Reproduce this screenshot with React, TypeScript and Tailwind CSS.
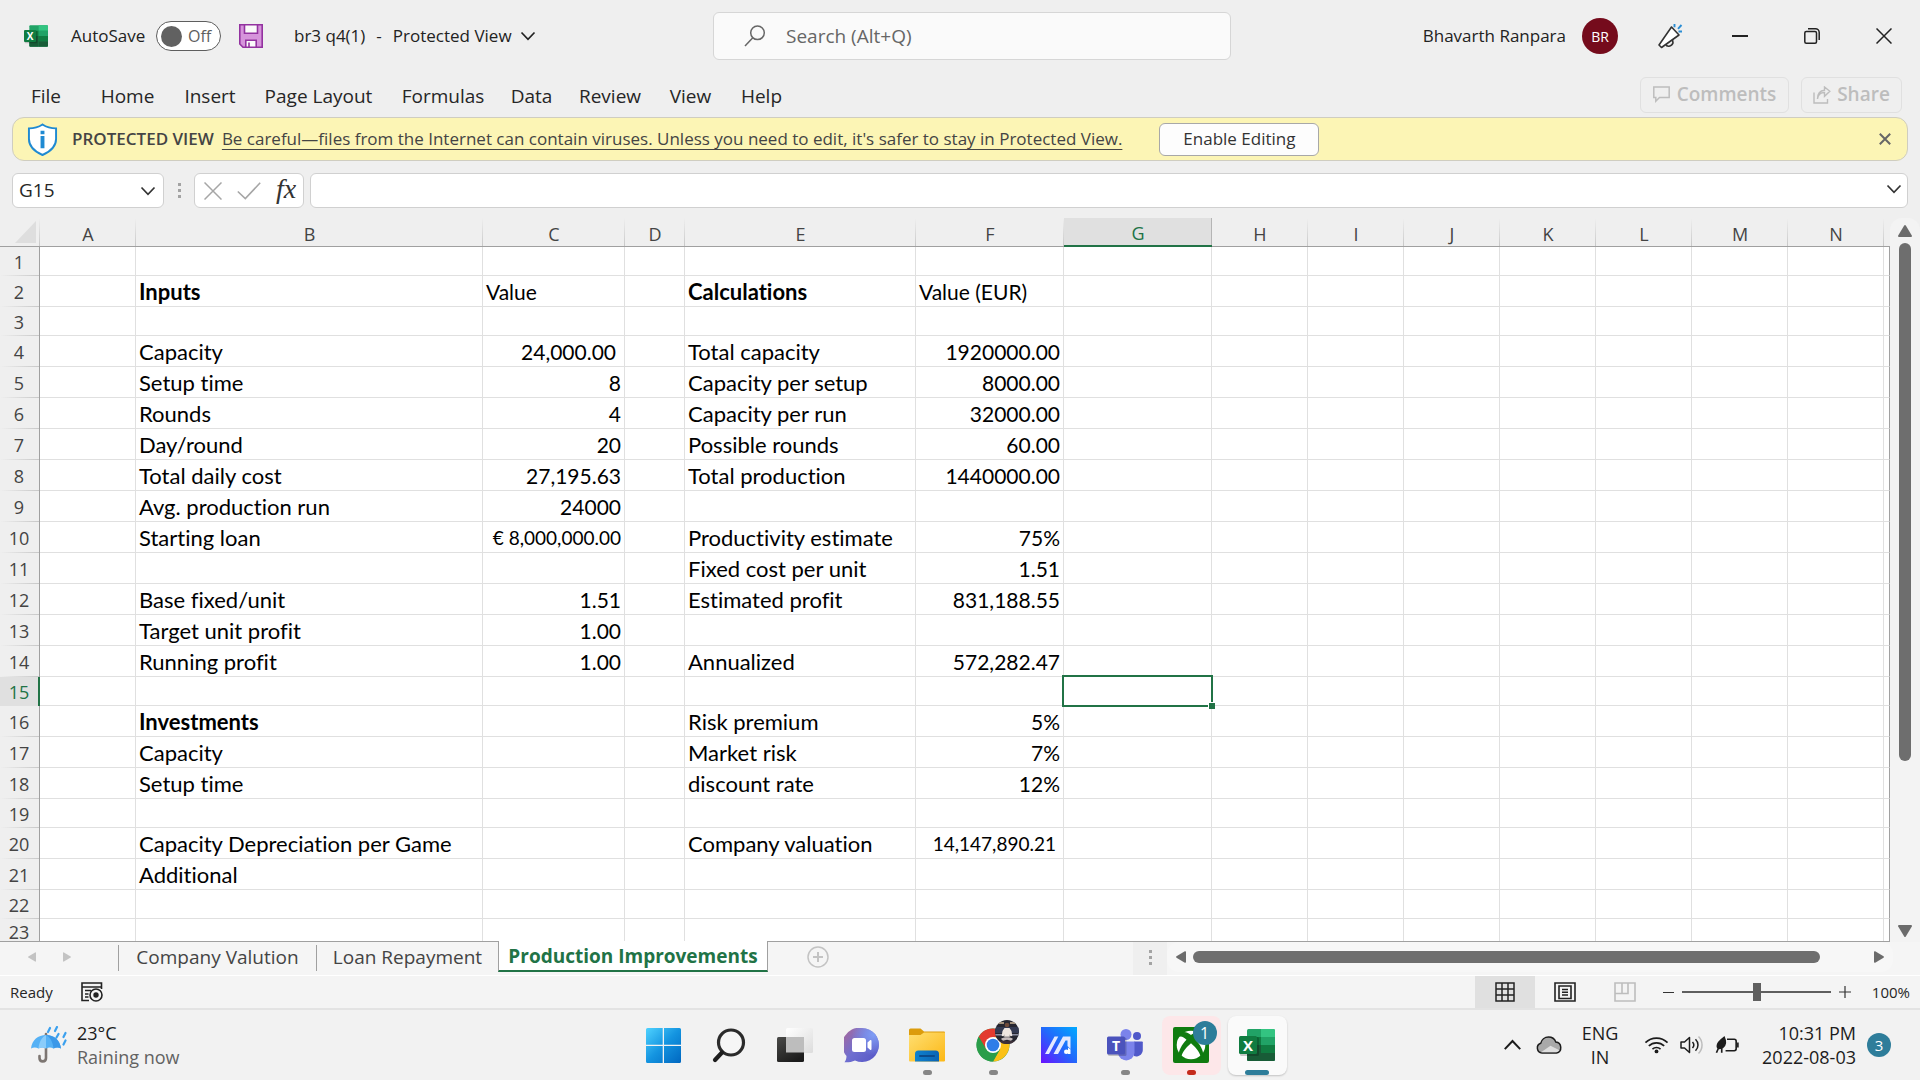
import { useState } from "react";

interface IRow {
  id: number;
  height: string;
  cells: Record<string, string>;
}

const columns = [
  { name: "A", width: "w-[96px]" },
  { name: "B", width: "w-[347px]" },
  { name: "C", width: "w-[142px]" },
  { name: "D", width: "w-[60px]" },
  { name: "E", width: "w-[231px]" },
  { name: "F", width: "w-[148px]" },
  { name: "G", width: "w-[148px]" },
  { name: "H", width: "w-[96px]" },
  { name: "I", width: "w-[96px]" },
  { name: "J", width: "w-[96px]" },
  { name: "K", width: "w-[96px]" },
  { name: "L", width: "w-[96px]" },
  { name: "M", width: "w-[96px]" },
  { name: "N", width: "w-[96px]" },
];

const rows: IRow[] = [
  { id: 1, height: "h-[29px]", cells: {} },
  { id: 2, height: "h-[31px]", cells: { B: "Inputs", C: "Value", E: "Calculations", F: "Value (EUR)" } },
  { id: 3, height: "h-[29px]", cells: {} },
  { id: 4, height: "h-[31px]", cells: { B: "Capacity", C: "24,000.00", E: "Total capacity", F: "1920000.00" } },
  { id: 5, height: "h-[31px]", cells: { B: "Setup time", C: "8", E: "Capacity per setup", F: "8000.00" } },
  { id: 6, height: "h-[31px]", cells: { B: "Rounds", C: "4", E: "Capacity per run", F: "32000.00" } },
  { id: 7, height: "h-[31px]", cells: { B: "Day/round", C: "20", E: "Possible rounds", F: "60.00" } },
  { id: 8, height: "h-[31px]", cells: { B: "Total daily cost", C: "27,195.63", E: "Total production", F: "1440000.00" } },
  { id: 9, height: "h-[31px]", cells: { B: "Avg. production run", C: "24000" } },
  { id: 10, height: "h-[31px]", cells: { B: "Starting loan", C: "€ 8,000,000.00", E: "Productivity estimate", F: "75%" } },
  { id: 11, height: "h-[31px]", cells: { E: "Fixed cost per unit", F: "1.51" } },
  { id: 12, height: "h-[31px]", cells: { B: "Base fixed/unit", C: "1.51", E: "Estimated profit", F: "831,188.55" } },
  { id: 13, height: "h-[31px]", cells: { B: "Target unit profit", C: "1.00" } },
  { id: 14, height: "h-[31px]", cells: { B: "Running profit", C: "1.00", E: "Annualized", F: "572,282.47" } },
  { id: 15, height: "h-[29px]", cells: {} },
  { id: 16, height: "h-[31px]", cells: { B: "Investments", E: "Risk premium", F: "5%" } },
  { id: 17, height: "h-[31px]", cells: { B: "Capacity", E: "Market risk", F: "7%" } },
  { id: 18, height: "h-[31px]", cells: { B: "Setup time", E: "discount rate", F: "12%" } },
  { id: 19, height: "h-[29px]", cells: {} },
  { id: 20, height: "h-[31px]", cells: { B: "Capacity Depreciation per Game", E: "Company valuation", F: "14,147,890.21" } },
  { id: 21, height: "h-[31px]", cells: { B: "Additional" } },
  { id: 22, height: "h-[29px]", cells: {} },
  { id: 23, height: "h-[25px]", cells: {} },
];

const boldCells = ["B2", "E2", "B16"];

// Cells whose format differs from the rest of the column
const cellFormats: Record<string, string> = {
  C2: "pr-[3px] text-[21px]",
  F2: "pr-[3px] text-[21px]",
  C4: "pr-[8px] text-[21px]",
  C10: "pr-[3px] text-[19px]",
  F20: "pr-[7px] text-[19px]",
};

const ribbonTabs = [
  { name: "File", width: "w-[70px]" },
  { name: "Home", width: "w-[93px]" },
  { name: "Insert", width: "w-[72px]" },
  { name: "Page Layout", width: "w-[145px]" },
  { name: "Formulas", width: "w-[104px]" },
  { name: "Data", width: "w-[73px]" },
  { name: "Review", width: "w-[84px]" },
  { name: "View", width: "w-[77px]" },
  { name: "Help", width: "w-[65px]" },
];

/* ---------- icons ---------- */

const ExcelIcon = ({ className }: { className: string }) => (
  <svg viewBox="0 0 36 36" className={className} aria-hidden="true">
    <rect x="8" y="2" width="28" height="32" rx="1.5" fill="#21a366" />
    <path d="M22 2h12.500a1.500 1.500 0 0 1 1.500 1.500V10H22z" fill="#33c481" />
    <path d="M8 10h14v8H8z" fill="#107c41" />
    <path d="M22 10h14v8H22z" fill="#21a366" />
    <path d="M8 18h14v16H9.500A1.500 1.500 0 0 1 8 32.500z" fill="#185c37" />
    <path d="M22 18h14v8H22z" fill="#107c41" />
    <path d="M22 26h14v6.500a1.500 1.500 0 0 1-1.500 1.500H22z" fill="#185c37" />
    <rect x="1" y="10" width="19" height="19" rx="1.500" fill="#000" opacity="0.2" />
    <rect x="0" y="9" width="18" height="18" rx="1.500" fill="#107c41" />
    <text x="9" y="23.500" textAnchor="middle" fontSize="15" fontWeight="700" fill="#fff" fontFamily="Open Sans, sans-serif">
      X
    </text>
  </svg>
);

const ChevronDown = ({ className }: { className: string }) => (
  <svg viewBox="0 0 16 10" className={className} fill="none" stroke="currentColor" strokeWidth="1.7" aria-hidden="true">
    <path d="M1.500 1.500 8 8.300l6.500-6.800" />
  </svg>
);

const SaveIcon = () => (
  <svg viewBox="0 0 24 24" className="size-6" aria-hidden="true">
    <path d="M.8.800h22.400v22.400H4L.8 20z" fill="#d694db" stroke="#9332a0" strokeWidth="1.600" />
    <path d="M5.500.8h13v8.400h-13z" fill="#fafafa" stroke="#9332a0" strokeWidth="1.600" />
    <path d="M6.800 23.200v-7h10.400v7z" fill="#fafafa" stroke="#9332a0" strokeWidth="1.600" />
    <path d="M10 18.500v4.500" stroke="#9332a0" strokeWidth="1.600" />
  </svg>
);

const MegaphoneIcon = () => (
  <svg viewBox="0 0 26 26" className="size-[26px]" fill="none" stroke="#333" strokeWidth="1.600" strokeLinejoin="round" aria-hidden="true">
    <path d="m14.500 4 7.500 8L4.500 24.500 2 22z" fill="#fff" />
    <path d="M9 21.500c.5 2.500 5.500 2.500 7-1.500l-.5-3" />
    <path d="M17.500 1v3.200M24.500 2 21 5.800M21.500 8.500h3.500" stroke="#2a8dd4" strokeWidth="1.900" />
  </svg>
);

const ShieldIcon = () => (
  <svg viewBox="0 0 32 34" className="h-[33px] w-[31px]" aria-hidden="true">
    <path d="M16 1.500c4.500 3 9 4 14 4v11c0 8-6 13-14 16.500C8 29.500 2 24.500 2 16.500v-11c5 0 9.500-1 14-4z" fill="#fff" stroke="#1f8ad2" strokeWidth="2" />
    <path d="M14 8h4v3.500h-4zM14 13.500h4V26h-4z" fill="#1f8ad2" />
  </svg>
);

const StartIcon = () => (
  <svg viewBox="0 0 35 35" className="size-[35px]" aria-hidden="true">
    <defs>
      <linearGradient id="start" x1="0" y1="0" x2="35" y2="35" gradientUnits="userSpaceOnUse">
        <stop stopColor="#4fd2ff" />
        <stop offset="0.500" stopColor="#1494e0" />
        <stop offset="1" stopColor="#0067c0" />
      </linearGradient>
    </defs>
    <path fill="url(#start)" d="M1.500 0h15.200v16.700H0V1.500A1.500 1.500 0 0 1 1.500 0zM18 0h15.500A1.500 1.500 0 0 1 35 1.500v15.200H18zM0 18h16.700v17H1.500A1.500 1.500 0 0 1 0 33.500zM18 18h17v15.500a1.500 1.500 0 0 1-1.500 1.500H18z" />
  </svg>
);

const TaskSearchIcon = () => (
  <svg viewBox="0 0 34 35" className="h-[35px] w-[34px]" fill="none" aria-hidden="true">
    <circle cx="19" cy="14.500" r="12.500" stroke="#2b2b2b" strokeWidth="3.200" fill="#f6f6f6" />
    <path d="M10 24.500 3 32" stroke="#1d1d1d" strokeWidth="4.200" strokeLinecap="round" />
  </svg>
);

const TaskViewIcon = () => (
  <svg viewBox="0 0 36 35" className="h-[35px] w-[36px]" aria-hidden="true">
    <defs>
      <linearGradient id="tvDark" x1="0" y1="0" x2="0.600" y2="1">
        <stop stopColor="#4a4a48" />
        <stop offset="1" stopColor="#1c1c1c" />
      </linearGradient>
      <linearGradient id="tvLight" x1="0" y1="0" x2="1" y2="1">
        <stop stopColor="#fff" />
        <stop offset="1" stopColor="#dcdcdc" />
      </linearGradient>
    </defs>
    <rect x="9" y="0" width="27" height="25" rx="1.500" fill="url(#tvLight)" />
    <rect x="0" y="9" width="27" height="25" rx="1.500" fill="url(#tvDark)" />
    <path d="M9 9h18v15.500H9z" fill="#bdbdbd" />
  </svg>
);

const ChatIcon = () => (
  <svg viewBox="0 0 35 35" className="size-[35px]" aria-hidden="true">
    <defs>
      <linearGradient id="chat" x1="0.100" y1="0.200" x2="0.900" y2="0.800">
        <stop stopColor="#9b6aa8" />
        <stop offset="0.450" stopColor="#6f6fd0" />
        <stop offset="1" stopColor="#5b5bc8" />
      </linearGradient>
      <radialGradient id="chatGlow" cx="0.850" cy="0.200" r="0.600">
        <stop stopColor="#7f9df5" />
        <stop offset="1" stopColor="#7f9df5" stopOpacity="0" />
      </radialGradient>
    </defs>
    <path d="M18 0a17 17 0 1 1-7 32.500C8 34 4 34.500.5 34.300c1.500-2 2-4.300 2-6.300A17 17 0 0 1 18 0z" fill="url(#chat)" />
    <path d="M18 0a17 17 0 1 1-7 32.500C8 34 4 34.500.5 34.300c1.500-2 2-4.300 2-6.300A17 17 0 0 1 18 0z" fill="url(#chatGlow)" />
    <rect x="8" y="10" width="14" height="14" rx="2.500" fill="#fff" />
    <path d="m23.500 14.500 2.500-2.300c.8-.6 1.500-.3 1.500.7v8.200c0 1-.7 1.300-1.500.7l-2.500-2.300z" fill="#fff" />
  </svg>
);

const FolderIcon = () => (
  <svg viewBox="0 0 36 34" className="h-[34px] w-[36px]" aria-hidden="true">
    <defs>
      <linearGradient id="folder" x1="0" y1="0" x2="1" y2="1">
        <stop stopColor="#ffdf72" />
        <stop offset="1" stopColor="#fcb816" />
      </linearGradient>
      <linearGradient id="folderBlue" x1="0" y1="0" x2="1" y2="0">
        <stop stopColor="#0f82cf" />
        <stop offset="1" stopColor="#0a64b4" />
      </linearGradient>
    </defs>
    <path d="M0 2a1.500 1.500 0 0 1 1.500-1.500h10L15 3.500h20a1 1 0 0 1 1 1V10H0z" fill="#dc9c0c" />
    <path d="M0 7h11.500L15 4.500h21v28a1 1 0 0 1-1 1H1a1 1 0 0 1-1-1z" fill="url(#folder)" />
    <path d="M6 33.500V26c0-2 1-3.500 3.500-3.500h17c2.500 0 3.500 1.500 3.500 3.500v7.500z" fill="url(#folderBlue)" />
    <path d="M11 28h14" stroke="#0a4b8c" strokeWidth="2" strokeLinecap="round" />
  </svg>
);

const ChromeIcon = () => (
  <svg viewBox="0 0 44 42" className="h-[42px] w-[44px]" aria-hidden="true">
    <defs>
      <clipPath id="profile">
        <circle cx="31" cy="12" r="12" />
      </clipPath>
    </defs>
    <circle cx="17" cy="25" r="16.500" fill="#2a9d4a" />
    <path d="M17 25 2.700 16.800A16.500 16.500 0 0 1 31.300 16.800L17 17z" fill="#e33b2e" />
    <path d="M17 17h14.400A16.500 16.500 0 0 1 17 41.500L24.200 29z" fill="#fbc116" />
    <path d="M2.700 16.800 10 29.200l7-4.200-.5-8z" fill="#e33b2e" />
    <path d="M2.700 16.800a16.500 16.500 0 0 0 14.300 24.700L24 29H10z" fill="#2a9d4a" />
    <circle cx="17" cy="25" r="8" fill="#fff" />
    <circle cx="17" cy="25" r="6.300" fill="#2f7ee8" />
    <g clipPath="url(#profile)">
      <path d="M19 0h24v24H19z" fill="#262630" />
      <path d="M19 2h9v2h-9zM34 2h9v2h-9z" fill="#a5947f" />
      <path d="M19 7h24v6H19z" fill="#343a52" />
      <path d="M19 14h7v1.500h-7zM36 14h7v1.500h-7z" fill="#8b8ea0" />
      <circle cx="31" cy="5" r="2.300" fill="#6f4a3a" />
      <path d="M28.500 8h5l2 3 .8 5-2 .3-.5-2v2.500h-5.600v-2.500l-.5 2-2-.3.800-5z" fill="#efe6e0" />
      <path d="M25 19c1.500-2.500 10.500-2.500 12 0l-2 1.800-4-1-4 1z" fill="#c7bcbc" />
      <path d="M19 21h24v3H19z" fill="#3c3038" />
    </g>
  </svg>
);

const ArmouryIcon = () => (
  <svg viewBox="0 0 36 36" className="size-9" aria-hidden="true">
    <defs>
      <linearGradient id="asus" x1="0" y1="1" x2="1" y2="0">
        <stop stopColor="#6a11ff" />
        <stop offset="0.500" stopColor="#2368fb" />
        <stop offset="1" stopColor="#00aaff" />
      </linearGradient>
    </defs>
    <path d="M0 0h36v36H0z" fill="url(#asus)" />
    <path d="M4 27 13.500 9.500h3.800L8 27zM12.500 27 22 9.500h7.500V22l-3-3V13.500h-2L17 27z" fill="#e4e9ff" />
    <circle cx="25.300" cy="24.800" r="2.300" fill="#fff" />
    <path d="M27 20.500l2.500 2V27H27z" fill="#fff" />
  </svg>
);

const TeamsIcon = () => (
  <svg viewBox="0 0 36 33" className="h-[33px] w-[36px]" aria-hidden="true">
    <circle cx="19" cy="5.500" r="5.500" fill="#7b83eb" />
    <circle cx="30" cy="7" r="4" fill="#5059c9" />
    <path d="M27 12.500h8a.8.8 0 0 1 .8.800V21a6.500 6.500 0 0 1-8.800 6z" fill="#5059c9" />
    <path d="M11 12.500h16.500V24a8.300 8.300 0 0 1-16.500 0z" fill="#7b83eb" />
    <rect x="1" y="8.500" width="18.500" height="18.500" rx="1.500" fill="#000" opacity="0.200" />
    <rect x="0" y="7.500" width="18" height="18" rx="1.500" fill="#4b53bc" />
    <text x="9" y="21.500" textAnchor="middle" fontSize="14" fontWeight="700" fill="#fff" fontFamily="Open Sans, sans-serif">
      T
    </text>
  </svg>
);

const XboxIcon = () => (
  <svg viewBox="0 0 36 36" className="size-9" aria-hidden="true">
    <rect width="36" height="36" rx="2" fill="#107c10" />
    <circle cx="18" cy="18" r="14.300" fill="#fff" />
    <path d="M8.500 5.500C12 4 16 6.500 18 8c2-1.500 6-4 9.500-2.500L30 10c-2-1.500-5 .2-7.500 2.800C27 17.500 31 24 30 28.500l-2.500 2C28 26 22 19.500 18 16.200 14 19.500 8 26 8.500 30.500l-2.500-2C5 24 9 17.500 13.500 12.800 11 10.200 8 8.500 6 10z" fill="#107c10" />
  </svg>
);

const WeatherIcon = () => (
  <svg viewBox="0 0 36 38" className="h-[38px] w-[36px]" aria-hidden="true">
    <path d="M15 8v24c0 4.500-6.500 4.500-6.500 0v-2" fill="none" stroke="#7d7672" strokeWidth="2.600" strokeLinecap="round" />
    <path d="M0 22.500C1 14 7 9 15 9s14 5 15 13.500c-2.500-1.500-5-1.500-7.500 0-2.500-1.500-5-1.500-7.500 0-2.500-1.500-5-1.500-7.500 0-2.500-1.500-5-1.500-7.500 0z" fill="#55b1f5" />
    <path d="M15 9c-4 2-7 7-7.500 13.500 2.500-1.500 5-1.500 7.500 0z" fill="#8accfa" />
    <path d="M15 9c4 2 7 7 7.500 13.500 2.500-1.500 5-1.500 7.500 0C29 14 23 9 15 9z" fill="#3b98e8" />
    <path d="m19 2-2 4M26 1l-2 4M27.500 8l-2 3.500M34.500 7l-2 4M34.500 14.500l-2 4" stroke="#3ba0ee" strokeWidth="2.200" strokeLinecap="round" />
  </svg>
);

const TriangleIcon = ({ className }: { className: string }) => (
  <svg viewBox="0 0 14 12" className={className} fill="currentColor" aria-hidden="true">
    <path d="M6.200.6a1 1 0 0 1 1.600 0l6 10c.4.700 0 1.400-.8 1.400H1c-.8 0-1.200-.7-.8-1.400z" />
  </svg>
);

const Dots = () => (
  <span className="flex flex-col gap-[3px]">
    <span className="size-[3px] bg-[#a3a3a3]"></span>
    <span className="size-[3px] bg-[#a3a3a3]"></span>
    <span className="size-[3px] bg-[#a3a3a3]"></span>
  </span>
);

/* ---------- sections ---------- */

const TitleBar = () => {
  const [autoSave, setAutoSave] = useState(false);

  return (
    <header className="flex h-[72px] shrink-0 items-center text-[#222]">
      <div className="flex flex-1 items-center">
        <ExcelIcon className="ml-6 size-6" />
        <span id="autosave" className="ml-[23px] w-[85px] text-[17px]">
          AutoSave
        </span>
        <button
          role="switch"
          aria-checked={autoSave}
          aria-labelledby="autosave"
          onClick={() => setAutoSave(!autoSave)}
          className="flex h-[30px] w-[65px] items-center gap-[6px] rounded-full border border-[#5e5e5e] bg-white px-[4px] text-[16px] text-[#5e5e5e]"
        >
          <span className="size-[21px] rounded-full bg-[#616161]"></span>
          {autoSave ? "On" : "Off"}
        </button>
        <button aria-label="Save" className="ml-[18px]">
          <SaveIcon />
        </button>
        <button className="ml-[31px] flex items-center gap-[8px] text-[17px] whitespace-pre">
          <span>br3 q4(1)</span>
          <span className="px-[3px]">-</span>
          <span>Protected View</span>
          <ChevronDown className="h-[10px] w-[16px]" />
        </button>
      </div>
      <label className="ml-[24px] flex h-12 w-[518px] items-center rounded-md border border-[#d6d6d6] bg-[#fafafa] pl-[30px] text-[#666]">
        <svg viewBox="0 0 22 22" className="size-[22px]" fill="none" stroke="currentColor" strokeWidth="1.500" aria-hidden="true">
          <circle cx="13.500" cy="7.800" r="6.800" />
          <path d="M8.800 12.800 1 21" />
        </svg>
        <input type="text" aria-label="Search" placeholder="Search (Alt+Q)" className="ml-[20px] flex-1 bg-transparent text-[19px] outline-none placeholder:text-[#666]" />
      </label>
      <div className="flex flex-1 items-center justify-end">
        <button className="flex items-center gap-[16px] text-[17px]">
          Bhavarth Ranpara
          <span className="flex size-9 items-center justify-center rounded-full bg-[#750b1c] text-[14px] text-white">BR</span>
        </button>
        <button aria-label="Coming soon" className="mr-[21px] ml-[39px]">
          <MegaphoneIcon />
        </button>
        <button aria-label="Minimize" className="flex h-10 w-[72px] items-center justify-center">
          <span className="h-[2px] w-4 bg-[#222]"></span>
        </button>
        <button aria-label="Restore" className="flex h-10 w-[72px] items-center justify-center">
          <svg viewBox="0 0 16 16" className="size-4" fill="none" stroke="#222" strokeWidth="1.500" aria-hidden="true">
            <rect x="0.800" y="3.500" width="11.700" height="11.700" rx="1.500" />
            <path d="M4 .8h7.500a3.700 3.700 0 0 1 3.700 3.700V12" />
          </svg>
        </button>
        <button aria-label="Close" className="flex h-10 w-[72px] items-center justify-center">
          <svg viewBox="0 0 16 16" className="size-4" stroke="#222" strokeWidth="1.500" aria-hidden="true">
            <path d="m.5.500 15 15M15.500.500l-15 15" />
          </svg>
        </button>
      </div>
    </header>
  );
};

const Ribbon = () => (
  <nav className="flex h-[45px] shrink-0 items-center pr-[18px] pl-[11px]">
    {ribbonTabs.map((tab) => (
      <button key={tab.name} className={`${tab.width} pt-[2px] text-[19px] leading-6 whitespace-nowrap text-[#262626]`}>
        {tab.name}
      </button>
    ))}
    <button disabled className="ml-auto flex h-9 w-[149px] items-center justify-center gap-[7px] rounded-md border border-[#e0e0e0] text-[19px] font-semibold text-[#bdbdbd]">
      <svg viewBox="0 0 17 17" className="size-[17px]" fill="none" stroke="currentColor" strokeWidth="1.500" aria-hidden="true">
        <path d="M.8 1h15.400v10.500H6.500L2.800 15.200v-3.700h-2z" />
      </svg>
      Comments
    </button>
    <button disabled className="ml-[12px] flex h-9 w-[101px] items-center justify-center gap-[6px] rounded-md border border-[#e0e0e0] text-[19px] font-semibold text-[#bdbdbd]">
      <svg viewBox="0 0 18 18" className="size-[18px]" fill="none" stroke="currentColor" strokeWidth="1.400" aria-hidden="true">
        <path d="M1 6.500V17h13.500v-4" />
        <path d="M4.500 13c.5-4.500 3-6.500 7-6.500v3.800l5.300-5L11.500 1v3.200C7 4.500 4.500 7.500 4.500 13z" />
      </svg>
      Share
    </button>
  </nav>
);

const ProtectedBar = () => (
  <section className="mx-3 flex h-11 shrink-0 items-center rounded-xl border border-[#cfcdc0] bg-[#fcf5b5] pr-[16px] pl-[14px] text-[#444]">
    <ShieldIcon />
    <span className="ml-[14px] text-[17px] font-semibold">PROTECTED VIEW</span>
    <a href="#protected-view" className="ml-[8px] text-[17px] underline underline-offset-4">
      Be careful—files from the Internet can contain viruses. Unless you need to edit, it's safer to stay in Protected View.
    </a>
    <button className="ml-[37px] h-[33px] w-[160px] rounded-md border border-[#a8a8a8] bg-[#fdfdfd] text-[17px] text-[#333]">Enable Editing</button>
    <button aria-label="Close message bar" className="ml-auto">
      <svg viewBox="0 0 12 12" className="size-3" stroke="#666" strokeWidth="2" aria-hidden="true">
        <path d="m.8.800 10.400 10.400M11.200.800.800 11.200" />
      </svg>
    </button>
  </section>
);

const FormulaBar = () => (
  <section className="mx-3 mt-3 flex h-[35px] shrink-0 items-center">
    <div className="flex h-full w-[152px] items-center rounded-md border border-[#d0d0d0] bg-white pr-[7px] pl-[6px]">
      <input type="text" aria-label="Name box" defaultValue="G15" className="w-0 flex-1 text-[19px] text-[#262626] outline-none" />
      <button aria-label="Open name list">
        <ChevronDown className="h-[10px] w-[16px] text-[#333]" />
      </button>
    </div>
    <span className="flex w-[30px] justify-center">
      <Dots />
    </span>
    <div className="flex h-full w-[110px] items-center rounded-md border border-[#d0d0d0] bg-white pl-[9px]">
      <button aria-label="Cancel">
        <svg viewBox="0 0 18 18" className="size-[18px]" stroke="#a6a6a6" strokeWidth="1.500" aria-hidden="true">
          <path d="m.5.500 17 17M17.500.500l-17 17" />
        </svg>
      </button>
      <button aria-label="Enter" className="ml-[15px]">
        <svg viewBox="0 0 24 18" className="h-[18px] w-6" fill="none" stroke="#a6a6a6" strokeWidth="1.600" aria-hidden="true">
          <path d="m.8 9.500 7.500 7L23.200.800" />
        </svg>
      </button>
      <button aria-label="Insert function" className="ml-[15px] pb-[4px] font-['Liberation_Serif',serif] text-[28px] leading-6 text-[#333] italic">
        fx
      </button>
    </div>
    <div className="ml-[6px] flex h-full flex-1 items-center rounded-md border border-[#d0d0d0] bg-white pr-[5px]">
      <input type="text" aria-label="Formula bar" className="h-full flex-1 px-2 text-[18px] outline-none" />
      <button aria-label="Expand formula bar" className="pb-[4px]">
        <ChevronDown className="h-[10px] w-[16px] text-[#333]" />
      </button>
    </div>
  </section>
);

const Sheet = () => {
  const [selected, setSelected] = useState("G15");

  // Labels and heading cells sit left, figures sit right and are set a little smaller
  const cellClass = (column: string, row: number) => {
    const isFigure = (column === "C" || column === "F") && row > 2;
    const align = isFigure ? "text-right" : "text-left";
    const weight = boldCells.includes(column + row) ? "font-bold" : "";
    const format = cellFormats[column + row] ?? (isFigure ? "pr-[3px] text-[21px]" : "pr-[3px] text-[22px]");
    return `${align} ${weight} ${format}`;
  };

  return (
    <div className="min-w-0 flex-1 overflow-hidden border-b border-[#a0a0a0]">
      <table className="w-full table-fixed border-separate border-spacing-0">
        <thead>
          <tr className="h-[29px]">
            <th className="w-[40px] border-b border-[#a0a0a0] bg-[linear-gradient(to_bottom,#efefef,#c8c8c8)] bg-[length:1px_100%] bg-right bg-no-repeat p-0">
              <button aria-label="Select all" className="ml-[15px] block">
                <svg viewBox="0 0 21 22" className="h-[22px] w-[21px]" fill="#dedede" aria-hidden="true">
                  <path d="M21 0v22H0z" />
                </svg>
              </button>
            </th>
            {columns.map((column) => (
              <th
                key={column.name}
                scope="col"
                className={`${column.width} p-0 pt-[3px] text-[18px] leading-[22px] font-normal ${
                  selected.startsWith(column.name)
                    ? "border-b-2 border-[#217346] bg-[#e0e0e0] text-[#217346] shadow-[inset_-1px_0_#b5b5b5]"
                    : "border-b border-[#a0a0a0] bg-[linear-gradient(to_bottom,#efefef,#c8c8c8)] bg-[length:1px_100%] bg-right bg-no-repeat text-[#444]"
                }`}
              >
                {column.name}
              </th>
            ))}
            <th className="border-b border-[#a0a0a0] p-0"></th>
          </tr>
        </thead>
        <tbody>
          {rows.map((row) => (
            <tr key={row.id} className={row.height}>
              <th
                scope="row"
                className={`border-r p-0 pr-[1px] text-[18px] leading-[22px] font-normal ${
                  selected.slice(1) === String(row.id)
                    ? "border-[#217346] bg-[#e0e0e0] text-[#217346] shadow-[inset_-1px_0_#217346]"
                    : "border-[#a0a0a0] bg-[linear-gradient(to_right,#efefef,#c8c8c8)] bg-[length:100%_1px] bg-bottom bg-no-repeat text-[#444]"
                }`}
              >
                {row.id}
              </th>
              {columns.map((column) => {
                const name = column.name + row.id;
                return (
                  <td
                    key={name}
                    onClick={() => setSelected(name)}
                    className={`relative border-r border-b border-[#e0e0e0] bg-white pt-px pb-0 pl-[3px] font-[Lato,sans-serif] leading-[22px] whitespace-nowrap text-black [font-variant-ligatures:none] ${
                      selected === name ? "z-10" : ""
                    } ${cellClass(column.name, row.id)}`}
                  >
                    {row.cells[column.name]}
                    {selected === name && (
                      <span className="absolute -inset-[2px] border-2 border-[#217346]">
                        <span className="absolute -right-[4px] -bottom-[4px] size-[7px] border-t border-l border-white bg-[#217346]"></span>
                      </span>
                    )}
                  </td>
                );
              })}
              <td className="border-r border-b border-r-[#a0a0a0] border-b-[#e0e0e0] bg-white p-0"></td>
            </tr>
          ))}
        </tbody>
      </table>
    </div>
  );
};

const VerticalScroll = () => (
  <div className="flex w-[30px] shrink-0 flex-col items-center rounded-t-xl bg-[#f3f3f3] pt-[7px] pb-[5px] text-[#6b6b6b]">
    <button aria-label="Scroll up">
      <TriangleIcon className="h-[12px] w-[14px]" />
    </button>
    <div className="mt-[6px] flex w-full flex-1 justify-center">
      <div className="h-[76%] w-3 rounded-full bg-[#6e6e6e]"></div>
    </div>
    <button aria-label="Scroll down">
      <TriangleIcon className="h-[12px] w-[14px] rotate-180" />
    </button>
  </div>
);

const SheetTabs = () => (
  <section className="flex h-[34px] shrink-0 items-start border-b border-white bg-[#f5f5f5] text-[19px] leading-[24px] text-[#444]">
    <div className="flex h-[30px] w-[118px] items-center gap-[23px] pl-[26px] text-[#c3c3c3]">
      <button aria-label="Previous sheet">
        <TriangleIcon className="h-[8px] w-[12px] -rotate-90" />
      </button>
      <button aria-label="Next sheet">
        <TriangleIcon className="h-[8px] w-[12px] rotate-90" />
      </button>
    </div>
    <button className="mt-[3px] h-[26px] w-[198px] border-l border-[#a0a0a0] pb-[6px]">Company Valution</button>
    <button className="mt-[3px] h-[26px] w-[182px] border-l border-[#a0a0a0] pb-[6px]">Loan Repayment</button>
    <button className="-mt-px h-[31px] w-[270px] border-x border-b-2 border-x-[#a0a0a0] border-b-[#217346] bg-white font-bold text-[#217346]">Production Improvements</button>
    <button aria-label="New sheet" className="mt-[4px] ml-[39px]">
      <svg viewBox="0 0 22 22" className="size-[22px]" fill="none" stroke="#c3c3c3" strokeWidth="1.500" aria-hidden="true">
        <circle cx="11" cy="11" r="10" />
        <path d="M11 6v10M6 11h10" strokeWidth="2" />
      </svg>
    </button>
    <div className="ml-auto flex h-full w-[34px] items-center justify-center bg-[#efefef] pb-[2px]">
      <Dots />
    </div>
    <div className="mr-[27px] flex h-[30px] w-[726px] items-center rounded-xl bg-[#f7f7f7] px-[8px] text-[#6b6b6b]">
      <button aria-label="Scroll left">
        <TriangleIcon className="h-[10px] w-[12px] -rotate-90" />
      </button>
      <div className="mx-[6px] flex-1">
        <div className="h-3 w-[93%] rounded-full bg-[#6e6e6e]"></div>
      </div>
      <button aria-label="Scroll right">
        <TriangleIcon className="h-[10px] w-[12px] rotate-90" />
      </button>
    </div>
  </section>
);

const StatusBar = () => (
  <section className="flex h-[34px] shrink-0 items-center border-b-2 border-[#e3e3e3] bg-[#f4f4f4] pr-[10px] pl-[10px] text-[15px] text-[#262626]">
    <span className="w-[71px]">Ready</span>
    <button aria-label="Record macro">
      <svg viewBox="0 0 22 20" className="h-[20px] w-[22px]" fill="none" stroke="#222" strokeWidth="1.600" aria-hidden="true">
        <path d="M8 18.500H1V1h19.500v6M1 5h19.500M4 8.500h6M4 12h3.500M4 15h3.500" />
        <circle cx="15" cy="13" r="6" />
        <circle cx="15" cy="13" r="2.700" fill="#222" stroke="none" />
      </svg>
    </button>
    <button aria-label="Normal" className="ml-auto flex h-full w-[60px] items-center justify-center bg-[#e0e0e0]">
      <svg viewBox="0 0 20 20" className="size-5" fill="none" stroke="#222" strokeWidth="1.500" aria-hidden="true">
        <path d="M1 1h18v18H1zM1 7h18M1 13h18M7 1v18M13 1v18" />
      </svg>
    </button>
    <button aria-label="Page layout" className="flex h-full w-[60px] items-center justify-center">
      <svg viewBox="0 0 22 20" className="h-5 w-[22px]" fill="none" stroke="#222" strokeWidth="1.600" aria-hidden="true">
        <path d="M1 1h20v18H1zM5 4h12v12.500H5zM8 7.500h6M8 10.200h6M8 13h6" />
      </svg>
    </button>
    <button aria-label="Page break preview" className="flex h-full w-[60px] items-center justify-center">
      <svg viewBox="0 0 22 20" className="h-5 w-[22px]" fill="none" stroke="#bdbdbd" strokeWidth="1.600" aria-hidden="true">
        <path d="M1 1h20v18H1zM1 11.500h13V1M8 1v10.500" />
      </svg>
    </button>
    <button aria-label="Zoom out" className="ml-[8px] flex h-5 w-[11px] items-center">
      <span className="h-px w-full bg-[#333]"></span>
    </button>
    <input
      type="range"
      aria-label="Zoom"
      min={10}
      max={190}
      defaultValue={100}
      className="mx-[8px] h-[18px] w-[149px] appearance-none bg-[linear-gradient(#5f5f5f,#5f5f5f)] bg-[length:100%_2px] bg-center bg-no-repeat [&::-webkit-slider-thumb]:h-[18px] [&::-webkit-slider-thumb]:w-[8px] [&::-webkit-slider-thumb]:appearance-none [&::-webkit-slider-thumb]:bg-[#5f5f5f]"
    />
    <button aria-label="Zoom in">
      <svg viewBox="0 0 12 12" className="size-3" stroke="#333" strokeWidth="1.200" aria-hidden="true">
        <path d="M6 0v12M0 6h12" />
      </svg>
    </button>
    <button className="ml-[19px] w-[40px] text-right text-[15px] whitespace-nowrap">100%</button>
  </section>
);

const taskbarApps = [
  { name: "Start", icon: <StartIcon />, mark: "" },
  { name: "Search", icon: <TaskSearchIcon />, mark: "" },
  { name: "Task view", icon: <TaskViewIcon />, mark: "" },
  { name: "Chat", icon: <ChatIcon />, mark: "" },
  { name: "File Explorer", icon: <FolderIcon />, mark: "w-[9px] bg-[#868686]" },
  { name: "Google Chrome", icon: <ChromeIcon />, mark: "w-[9px] bg-[#868686]" },
  { name: "MyASUS", icon: <ArmouryIcon />, mark: "" },
  { name: "Microsoft Teams", icon: <TeamsIcon />, mark: "w-[9px] bg-[#868686]" },
  { name: "Xbox", icon: <XboxIcon />, mark: "w-[9px] bg-[#c42b1c]" },
  { name: "Excel", icon: <ExcelIcon className="size-9" />, mark: "w-[24px] bg-[#2e7d9a]" },
];

const taskbarTiles: Record<string, string> = {
  Xbox: "bg-[#fde7e9]",
  Excel: "bg-[#fafafa] shadow-[0_1px_2px_#00000033]",
};

const Taskbar = () => (
  <footer className="flex h-[70px] shrink-0 items-center bg-[#f2f2f2] text-[18px] leading-[24px] text-[#1c1c1c]">
    <div className="flex flex-1 items-center">
      <button className="ml-[31px] flex items-center gap-[10px] text-left">
        <WeatherIcon />
        <span>
          23°C
          <span className="block text-[#626262]">Raining now</span>
        </span>
      </button>
    </div>
    <div className="flex">
      {taskbarApps.map((app) => (
        <button key={app.name} aria-label={app.name} className="flex w-[66px] justify-center">
          <span className={`relative flex h-[59px] w-[59px] items-center justify-center rounded-lg ${taskbarTiles[app.name] ?? ""}`}>
            {app.name === "Google Chrome" ? <span className="-mt-[8px] ml-[9px]">{app.icon}</span> : app.icon}
            {app.name === "Xbox" && (
              <span className="absolute top-[5px] right-[4px] flex size-6 items-center justify-center rounded-full bg-[#2e7d9a] text-[16px] text-white">1</span>
            )}
            {app.mark && <span className={`absolute bottom-0 h-[5px] rounded-full ${app.mark}`}></span>}
          </span>
        </button>
      ))}
    </div>
    <div className="flex flex-1 items-center justify-end">
      <button aria-label="Show hidden icons">
        <ChevronDown className="h-[12px] w-[19px] rotate-180" />
      </button>
      <button aria-label="OneDrive" className="ml-[14px]">
        <svg viewBox="0 0 26 18" className="h-[18px] w-[26px]" stroke="#1c1c1c" strokeWidth="1.500" aria-hidden="true">
          <path d="M6 17a5 5 0 0 1-1.300-9.700C5.500 3.500 8.800 1 12.500 1c3.300 0 6.200 2 7.300 5a5.600 5.600 0 0 1 .7 11z" fill="#a9a9a9" />
          <path d="m5 16.200 9.500-6.400 9 4.500a4.500 4.500 0 0 1-3 2z" fill="#dedede" stroke="none" />
        </svg>
      </button>
      <button className="ml-[16px] w-[44px] text-center">
        ENG
        <br />
        IN
      </button>
      <button aria-label="Network, sound and battery" className="ml-[22px] flex items-center gap-[11px]">
        <svg viewBox="0 0 26 18" className="h-[18px] w-[25px]" fill="none" stroke="#1c1c1c" strokeWidth="1.700" aria-hidden="true">
          <path d="M1.500 6.500a16.500 16.500 0 0 1 23 0M5 10a11.500 11.500 0 0 1 16 0M8.800 13.200a6.500 6.500 0 0 1 8.400 0" />
          <circle cx="13" cy="15.700" r="2" fill="#1c1c1c" stroke="none" />
        </svg>
        <svg viewBox="0 0 24 20" className="h-[20px] w-[24px]" fill="none" stroke="#1c1c1c" strokeWidth="1.500" strokeLinejoin="round" aria-hidden="true">
          <path d="M1 7v6h3.500l5 4.500v-15l-5 4.500zM12.500 7a4.500 4.500 0 0 1 0 6M15.500 4.200a8 8 0 0 1 0 11.600" />
          <path d="M18.500 1.500a12 12 0 0 1 0 17" stroke="#bdbdbd" />
        </svg>
        <svg viewBox="0 0 26 18" className="h-[18px] w-[25px]" fill="none" stroke="#1c1c1c" strokeWidth="1.700" aria-hidden="true">
          <path d="M12.500 3H20a2 2 0 0 1 2 2v8a2 2 0 0 1-2 2h-9M23.800 6.500v5" />
          <path d="M9.500 1c2 4.500 1.500 9-1.500 10.500-2 1.200-4 1-5 .5-2-3.500 1-7 6.500-11z" fill="#1c1c1c" />
          <path d="M1.500 17C3 13 5 9.500 7.500 7.500M7 11v6" />
        </svg>
      </button>
      <button className="ml-[18px] w-[98px] text-right whitespace-nowrap">
        10:31 PM
        <br />
        2022-08-03
      </button>
      <button aria-label="3 notifications" className="mr-[29px] ml-[11px] flex size-6 items-center justify-center rounded-full bg-[#2e7d9a] text-[15px] text-white">
        3
      </button>
    </div>
  </footer>
);

function App() {
  return (
    <main className="flex h-screen min-w-[1280px] flex-col overflow-hidden bg-[#efefef] font-['Open_Sans','Noto_Sans',sans-serif]">
      <TitleBar />
      <Ribbon />
      <ProtectedBar />
      <FormulaBar />
      <div className="mt-[10px] flex min-h-0 flex-1">
        <Sheet />
        <VerticalScroll />
      </div>
      <SheetTabs />
      <StatusBar />
      <Taskbar />
    </main>
  );
}

export default App;
